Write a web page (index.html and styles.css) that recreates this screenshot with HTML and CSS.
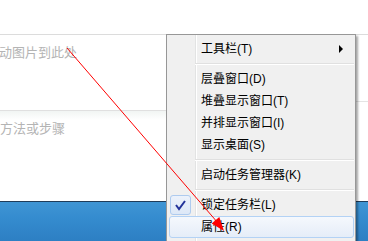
FILE: index.html
```html
<!DOCTYPE html>
<html lang="zh-CN">
<head>
    <meta charset="UTF-8" />
    <title>锁定任务栏</title>
    <link rel="stylesheet" href="styles.css">
</head>
<body>
    <div class="page">
        <div class="header"></div>
        <div class="content">
            <div class="left">
                <div class="drop"><span class="hint cut">拖动图片到此处</span></div>
                <div class="steps"><span class="hint">方法或步骤</span></div>
            </div>
            <div class="right">
                <div class="drop-side"></div>
            </div>
        </div>
        <div class="taskbar"></div>
    </div>

    <div class="menu">
        <div class="item">
            <span class="icon"></span>
            <span class="label">工具栏(T)</span>
            <span class="sub"></span>
        </div>
        <div class="sep"></div>
        <div class="item"><span class="icon"></span><span class="label">层叠窗口(D)</span></div>
        <div class="item"><span class="icon"></span><span class="label">堆叠显示窗口(T)</span></div>
        <div class="item"><span class="icon"></span><span class="label">并排显示窗口(I)</span></div>
        <div class="item"><span class="icon"></span><span class="label">显示桌面(S)</span></div>
        <div class="sep"></div>
        <div class="item"><span class="icon"></span><span class="label">启动任务管理器(K)</span></div>
        <div class="sep"></div>
        <div class="item">
            <span class="icon checked">
                <svg width="21" height="20" viewBox="0 0 21 20">
                    <polyline points="6,10 9,14 15,6" fill="none" stroke="#23339a" stroke-width="2" />
                </svg>
            </span>
            <span class="label">锁定任务栏(L)</span>
        </div>
        <div class="item hover"><span class="icon"></span><span class="label">属性(R)</span></div>
    </div>

    <!-- red annotation arrow -->
    <svg class="arrow" width="368" height="241" viewBox="0 0 368 241">
        <line x1="67" y1="48" x2="218" y2="223" stroke="#ff0000" stroke-width="1" />
        <polygon points="224,231 211.7,223.5 219.3,216.9" fill="#ff0000" />
    </svg>
</body>
</html>
```

FILE: styles.css
```css
body {
    margin: 0;
    padding: 0;
    width: 368px;
    height: 241px;
    overflow: hidden;
    position: relative;
    background: #fff;
    font-family: "Liberation Sans", "Noto Sans CJK SC", sans-serif;
    font-size: 12px;
    color: #000;
}
.page {
    display: flex;
    flex-direction: column;
    height: 241px;
}
.header {
    height: 34px;
    border-bottom: 1px solid #dcdcdc;
}
.content {
    display: flex;
    height: 167px;
}
.left {
    flex: 1;
    overflow: hidden;
}
.right {
    width: 13px;
}
.drop {
    height: 76px;
    box-sizing: border-box;
    border-bottom: 1px solid #e0e0e0;
    padding-top: 8px;
}
.drop-side {
    height: 66px;
    border-bottom: 1px solid #e4e4e4;
}
.steps {
    height: 90px;
    padding-top: 8px;
    box-sizing: border-box;
    background: linear-gradient(#f1f5f3, #fff 9px);
}
.hint {
    display: block;
    font-family: "Noto Sans CJK SC", sans-serif;
    font-size: 13px;
    line-height: 18px;
    color: #b4b4b4;
    white-space: nowrap;
}
.hint.cut {
    margin-left: -14px;
}
.taskbar {
    height: 39px;
    border-top: 1px solid #1f3c5a;
    background: linear-gradient(#3f95d4, #358ccf 40%, #2d7fc3);
}

.menu {
    position: absolute;
    left: 166px;
    top: 34px;
    width: 190px;
    box-sizing: border-box;
    padding: 3px 1px 3px 2px;
    border: 1px solid #979797;
    background: linear-gradient(to right, #f0f0f0 28px, #e2e3e3 28px, #e2e3e3 29px, #fff 29px, #fff 30px, #f0f0f0 30px);
    background-color: #f0f0f0;
    box-shadow: 2px 2px 2px rgba(0, 0, 0, 0.35);
}
.item {
    height: 22px;
    box-sizing: border-box;
    border: 1px solid transparent;
    border-radius: 3px;
    display: flex;
    align-items: center;
    white-space: nowrap;
}
.item.hover {
    border-color: #b3d2f5;
    background: linear-gradient(#f5f8fd, #e5edf8);
}
.icon {
    width: 21px;
    height: 20px;
    margin-right: 10px;
    box-sizing: border-box;
    flex: none;
}
.icon.checked {
    border: 1px solid #aecbef;
    border-radius: 3px;
    background: linear-gradient(#ecf2fb, #dde8f7);
}
.icon.checked svg {
    display: block;
    margin: -1px;
}
.label {
    line-height: 16px;
}
.sub {
    margin-left: auto;
    margin-right: 10px;
    width: 0;
    height: 0;
    border-top: 4px solid transparent;
    border-bottom: 4px solid transparent;
    border-left: 4px solid #000;
}
.sep {
    height: 8px;
    margin-left: 26px;
    background: linear-gradient(transparent 3px, #e0e0e0 3px, #e0e0e0 4px, #fff 4px, #fff 5px, transparent 5px);
}

.arrow {
    position: absolute;
    left: 0;
    top: 0;
    pointer-events: none;
}
```
